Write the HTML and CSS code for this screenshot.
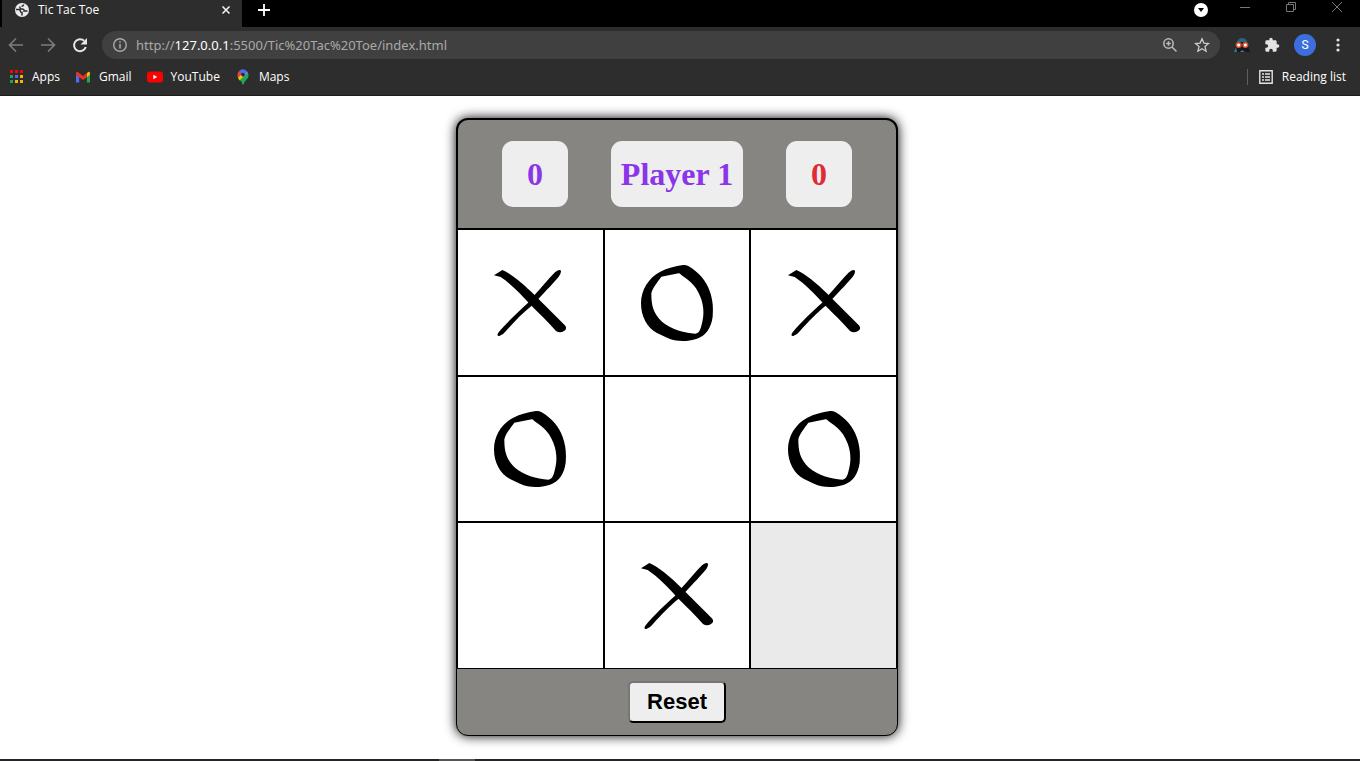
FILE: index.html
```html
<!DOCTYPE html>
<html lang="en">
<head>
<meta charset="utf-8">
<title>Tic Tac Toe</title>
<link rel="stylesheet" href="styles.css">
</head>
<body>
<svg class="defs" aria-hidden="true">
  <symbol id="mark-x" viewBox="0 0 300 285">
    <path d="M42 61L67 45C95 57 130 87 163 119C190 147 225 180 256 212Q262 222 252 228Q240 236 228 228C205 202 180 178 150 148C122 116 92 86 62 66Z"/>
    <path d="M243 47Q238 42 225 52C205 72 185 97 163 121L146 142C115 170 80 203 56 232Q48 244 58 243Q68 241 78 228C102 200 130 172 155 152L177 130C200 105 222 83 235 67Q244 55 243 47Z"/>
  </symbol>
  <symbol id="mark-o" viewBox="0 0 300 285">
    <path fill-rule="evenodd" d="M100 50C120 40 145 33 168 30Q177 29 185 34C215 52 238 78 248 108C258 135 259 160 257 185C252 220 238 240 210 251C175 262 145 259 120 248L90 234C60 218 42 185 42 145C42 105 65 68 100 50ZM103 65L155 55Q159 55 162 59C180 73 205 85 220 125C230 150 231 175 227 195C222 220 218 235 205 236C170 233 130 222 105 200C78 175 73 150 73 115C77 98 90 83 103 65Z"/>
  </symbol>
</svg>

<header class="browser">
  <div class="tabstrip">
    <div class="tab">
      <svg class="icon16" viewBox="0 0 16 16"><circle cx="8" cy="8" r="7" fill="#e8eaed"/><path d="M2 7.600H5Q6.300 7.600 6.300 9T8 10.500V13.500M6 4.500Q5.500 7 8 7T10 9H13.500M9.500 2.500Q9.500 4.200 7.500 4.200" fill="none" stroke="#2d2d2d" stroke-width="1.500"/></svg>
      <span class="tab-title">Tic Tac Toe</span>
      <button class="chrome-btn" type="button" aria-label="Close tab"><svg class="icon16" viewBox="0 0 16 16"><path d="M4.500 4.500l7 7M11.500 4.500l-7 7" stroke="#f1f1f1" stroke-width="1.600"/></svg></button>
    </div>
    <button class="chrome-btn" type="button" aria-label="New tab"><svg class="icon16" viewBox="0 0 16 16"><path d="M8 2v12M2 8h12" stroke="#fff" stroke-width="1.800"/></svg></button>
    <div class="window-controls">
      <button class="chrome-btn" type="button" aria-label="Search tabs"><svg class="icon16" viewBox="0 0 16 16"><circle cx="8" cy="8" r="7" fill="#fff"/><path d="M5 6h6l-3 4z" fill="#000"/></svg></button>
      <button class="chrome-btn win" type="button" aria-label="Minimize"><svg class="icon16" viewBox="0 0 16 16"><path d="M3 8.500h10" stroke="#777"/></svg></button>
      <button class="chrome-btn win" type="button" aria-label="Restore"><svg class="icon16" viewBox="0 0 16 16"><path d="M3.500 5.500h7v7h-7zM5.500 5.500v-2h7v7h-2" fill="none" stroke="#777"/></svg></button>
      <button class="chrome-btn win" type="button" aria-label="Close"><svg class="icon16" viewBox="0 0 16 16"><path d="M3 3l10 10M13 3L3 13" stroke="#777"/></svg></button>
    </div>
  </div>

  <div class="toolbar">
    <button class="chrome-btn" type="button" aria-label="Back"><svg class="icon16" viewBox="0 0 16 16"><path d="M15 8H2M8 1.500L1.500 8L8 14.500" fill="none" stroke="#7d7d7d" stroke-width="1.600"/></svg></button>
    <button class="chrome-btn" type="button" aria-label="Forward"><svg class="icon16" viewBox="0 0 16 16"><path d="M1 8h13M8 1.500L14.500 8L8 14.500" fill="none" stroke="#7d7d7d" stroke-width="1.600"/></svg></button>
    <button class="chrome-btn" type="button" aria-label="Reload"><svg class="icon16" viewBox="0 0 16 16"><path d="M13.800 10A6 6 0 1 1 12.200 3.800" fill="none" stroke="#e6e6e6" stroke-width="2"/><path d="M15 1v6.500H8.500z" fill="#e6e6e6"/></svg></button>
    <div class="omnibox">
      <svg class="icon16" viewBox="0 0 16 16"><circle cx="8" cy="8" r="6.300" fill="none" stroke="#aaa" stroke-width="1.400"/><path d="M8 7v4.500M8 4.200v1.600" stroke="#aaa" stroke-width="1.500"/></svg>
      <span class="url">http://<b>127.0.0.1</b>:5500/Tic%20Tac%20Toe/index.html</span>
      <button class="chrome-btn" type="button" aria-label="Zoom"><svg class="icon16" viewBox="0 0 16 16"><circle cx="6.500" cy="6.500" r="4.700" fill="none" stroke="#bbb" stroke-width="1.500"/><path d="M10 10l4.500 4.500M6.500 4.200v4.600M4.200 6.500h4.600" stroke="#bbb" stroke-width="1.500"/></svg></button>
      <button class="chrome-btn" type="button" aria-label="Bookmark this page"><svg class="icon16" viewBox="0 0 16 16"><path d="M8 1.800l1.900 4.300 4.600.4-3.500 3.100 1.100 4.600L8 11.800l-4.100 2.400L5 9.600 1.500 6.500l4.600-.4z" fill="none" stroke="#ccc" stroke-width="1.300"/></svg></button>
    </div>
    <div class="extensions">
      <button class="chrome-btn" type="button" aria-label="Extension"><svg class="icon16" viewBox="0 0 16 16"><path d="M0 15L3 6Q4 1 8 1T13 6L16 15z" fill="#19191d"/><path d="M2.500 6Q4 1 8 1Q12.500 1 13.500 6L11 5H5z" fill="#2a667a"/><path d="M0 15l2-5 1 5zM6 15l2-2 3 2z" fill="#347c90"/><circle cx="4.700" cy="8" r="2.300" fill="#fff" stroke="#d9512f" stroke-width="1.500"/><circle cx="11.300" cy="8" r="2.300" fill="#fff" stroke="#d9512f" stroke-width="1.500"/></svg></button>
      <button class="chrome-btn" type="button" aria-label="Extensions"><svg class="icon16" viewBox="0 0 24 24"><path fill="#e3e3e3" d="M20.500 11H19V7c0-1.100-.9-2-2-2h-4V3.500a2.500 2.500 0 0 0-5 0V5H4a2 2 0 0 0-2 2v3.800h1.500a2.700 2.700 0 0 1 0 5.400H2V20c0 1.100.9 2 2 2h3.800v-1.500a2.700 2.700 0 0 1 5.400 0V22H17c1.100 0 2-.9 2-2v-4h1.500a2.500 2.500 0 0 0 0-5z"/></svg></button>
      <button class="avatar" type="button">S</button>
      <button class="chrome-btn" type="button" aria-label="Menu"><svg class="icon16" viewBox="0 0 16 16" fill="#e3e3e3"><circle cx="8" cy="3" r="1.600"/><circle cx="8" cy="8" r="1.600"/><circle cx="8" cy="13" r="1.600"/></svg></button>
    </div>
  </div>

  <nav class="bookmarks" aria-label="Bookmarks">
    <a href="#apps"><svg class="icon16" viewBox="0 0 16 16"><path d="M2 1h3v3H2zM7 1h3v3H7zM12 1h3v3h-3z" fill="#f00"/><path d="M2 6h3v3H2zM2 11h3v3H2z" fill="#1ea362"/><path d="M7 6h3v3H7z" fill="#4d6bf0"/><path d="M12 6h3v3h-3zM7 11h3v3H7zM12 11h3v3h-3z" fill="#f5b400"/></svg>Apps</a>
    <a href="#gmail"><svg class="icon16" viewBox="0 0 16 16"><path d="M1 4v9.500h3.200V7z" fill="#4e6cf0"/><path d="M15 4v9.500h-3.200V7z" fill="#1ea855"/><path d="M11.800 4.500L13 3q2-.8 2 1.500v1.300L11.800 8.300z" fill="#fbbc04"/><path d="M1 4.500Q1 2 3 3l5 4 3.800-3v4.300L8 11 4.200 8.300 1 5.800z" fill="#ea2f23"/></svg>Gmail</a>
    <a href="#youtube"><svg class="icon16" viewBox="0 0 16 16"><rect x="0" y="2.500" width="16" height="11" rx="3" fill="#f00"/><path d="M6.300 5.700v4.600L10.200 8z" fill="#fff"/></svg>YouTube</a>
    <a href="#maps"><svg class="icon16" viewBox="0 0 16 16"><path d="M3.500 10Q2.500 8 2.500 6L8 6l5-2Q14.500 8 11.500 10.500Q9 13 8.500 15.500h-1Q7 12.500 3.500 10z" fill="#20aa50"/><path d="M3 8.500L8 4l2 2-5.500 5.500z" fill="#fbbc04"/><path d="M2.600 6Q2.500 3.600 4 2l3 2.500-4 4.300z" fill="#ea4335"/><path d="M4 2Q8-1.500 12 2.200L8 6z" fill="#4d6bf0"/><path d="M12 2.200q.8.800 1.100 2L9 8 7 5.500z" fill="#5b83f5"/><circle cx="8" cy="5.600" r="1.900" fill="#2d2d2d"/></svg>Maps</a>
    <button class="reading-list" type="button"><svg class="icon16" viewBox="0 0 16 16"><path d="M1.800 1.800h12.400v12.400H1.800z" fill="none" stroke="#e3e3e3" stroke-width="1.400"/><path d="M4 5h2M7 5h5M4 8h2M7 8h5M4 11h2M7 11h5" stroke="#e3e3e3" stroke-width="1.600"/></svg>Reading list</button>
  </nav>
</header>

<main class="page">
  <section class="game" aria-label="Tic Tac Toe">
    <div class="scorebar">
      <output class="score player-one">0</output>
      <output class="score turn player-one">Player 1</output>
      <output class="score player-two">0</output>
    </div>
    <div class="board">
      <button class="cell" type="button" aria-label="X"><svg class="mark"><use href="#mark-x"/></svg></button>
      <button class="cell" type="button" aria-label="O"><svg class="mark"><use href="#mark-o"/></svg></button>
      <button class="cell" type="button" aria-label="X"><svg class="mark"><use href="#mark-x"/></svg></button>
      <button class="cell" type="button" aria-label="O"><svg class="mark"><use href="#mark-o"/></svg></button>
      <button class="cell" type="button" aria-label="Empty"></button>
      <button class="cell" type="button" aria-label="O"><svg class="mark"><use href="#mark-o"/></svg></button>
      <button class="cell" type="button" aria-label="Empty"></button>
      <button class="cell" type="button" aria-label="X"><svg class="mark"><use href="#mark-x"/></svg></button>
      <button class="cell active" type="button" aria-label="Empty"></button>
    </div>
    <div class="controls">
      <button class="reset" type="button">Reset</button>
    </div>
  </section>
</main>
<div class="taskbar"><span class="taskbar-item"></span></div>
</body>
</html>
```
FILE: styles.css
```css
* { box-sizing: border-box; }
body {
  margin: 0;
  min-height: 100vh;
  display: flex;
  flex-direction: column;
  background: #fff;
}
.defs { position: absolute; width: 0; height: 0; }
.icon16 { display: block; flex: none; width: 16px; height: 16px; }
.chrome-btn {
  display: block;
  flex: none;
  padding: 0;
  border: 0;
  background: none;
}

.browser {
  background: #2d2d2d;
  border-bottom: 1px solid #1b1b1b;
  color: #fff;
  font: 12px/16px "Open Sans", "Noto Sans", sans-serif;
}
.tabstrip {
  display: flex;
  align-items: flex-start;
  height: 27px;
  padding: 0 15px 0 2px;
  background: #000;
}
.tabstrip > .chrome-btn { margin: 2px 0 0 14px; }
.tab {
  display: flex;
  align-items: flex-start;
  gap: 8px;
  width: 240px;
  height: 27px;
  padding: 2px 8px 0 12px;
  background: #2d2d2d;
}
.tab-title { flex: 1; }
.window-controls {
  display: flex;
  align-items: flex-start;
  gap: 30px;
  margin-left: auto;
}
.window-controls .chrome-btn:first-child { margin: 2px -2px 0 0; }
.window-controls .win { margin-top: -1px; }

.toolbar {
  display: flex;
  align-items: center;
  gap: 16px;
  height: 36px;
  padding: 0 14px 0 8px;
}
.omnibox {
  display: flex;
  flex: 1;
  align-items: center;
  gap: 16px;
  height: 28px;
  margin-left: -2px;
  padding: 0 10px;
  border-radius: 14px;
  background: #404040;
}
.url {
  flex: 1;
  margin-left: -8px;
  color: #aaa;
  font: 13px/16px "Noto Sans", sans-serif;
}
.url b { color: #fff; font-weight: 400; }
.extensions {
  display: flex;
  align-items: center;
  gap: 14px;
  margin-left: -2px;
}
.avatar {
  width: 22px;
  height: 22px;
  padding: 0;
  border: 0;
  border-radius: 50%;
  background: #3c6fdd;
  color: #fff;
  font: 12px/22px Roboto, sans-serif;
}

.bookmarks {
  display: flex;
  align-items: center;
  gap: 15px;
  height: 32px;
  padding: 0 14px 5px 8px;
}
.bookmarks a {
  display: flex;
  gap: 8px;
  color: inherit;
  text-decoration: none;
}
.reading-list {
  display: flex;
  gap: 8px;
  margin-left: auto;
  padding: 0 0 0 10px;
  border: 0;
  border-left: 1px solid #5f5f5f;
  background: none;
  color: inherit;
  font: inherit;
}

.page {
  flex: 1;
  display: flex;
  justify-content: center;
  align-items: flex-start;
  padding: 22px 6px 22px 0;
}
.game {
  width: 442px;
  max-width: 100%;
  border-radius: 12px;
  background: #878582;
  box-shadow: 0 0 12px #000;
}
.scorebar {
  display: flex;
  justify-content: center;
  gap: 43px;
  padding: 21px 0;
  border: 2px solid #000;
  border-radius: 12px 12px 0 0;
}
.score {
  width: 66px;
  border-radius: 11px;
  background: #eee;
  font: bold 32px/66px "Liberation Serif", serif;
  text-align: center;
}
.turn { width: 132px; }
.player-one { color: #8a35e8; }
.player-two { color: #e02a35; }
.board {
  display: grid;
  grid-template-columns: repeat(3, 1fr);
  grid-template-rows: repeat(3, 1fr);
  gap: 2px;
  height: 438px;
  border: solid #000;
  border-width: 0 2px;
  background: #000;
}
.cell {
  display: grid;
  place-items: center;
  padding: 0;
  border: 0;
  background: #fff;
}
.cell.active { background: #eaeaea; }
.mark { width: 100px; height: 95px; }
.controls {
  display: flex;
  justify-content: center;
  padding: 12px 0;
  border: 1px solid #000;
  border-radius: 0 0 12px 12px;
}
.reset {
  width: 98px;
  height: 42px;
  padding: 0;
  border: 2px outset #767676;
  border-color: #767676 #212121 #212121 #767676;
  border-radius: 5px;
  background: #eee;
  color: #000;
  font: bold 22px/26px "Liberation Sans", sans-serif;
}

.taskbar {
  display: flex;
  height: 2px;
  padding-left: 439px;
  background: #252527;
}
.taskbar-item { width: 36px; background: #555; }
```
